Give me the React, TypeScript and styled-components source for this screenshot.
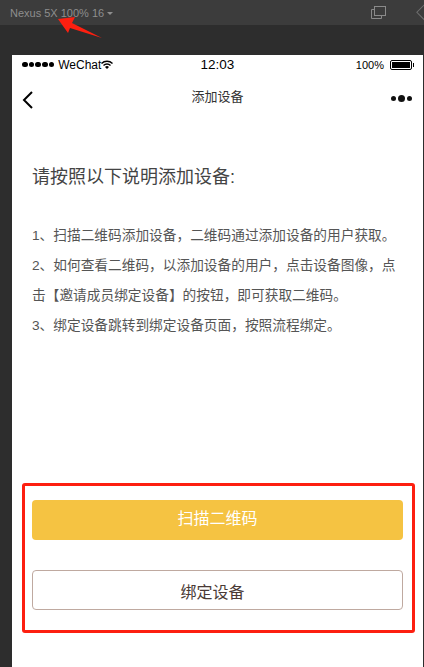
import React from 'react';
import styled, { createGlobalStyle } from 'styled-components';

const Global = createGlobalStyle`
  html, body { margin: 0; padding: 0; background: #2d2d2d; }
  body { font-family: "Liberation Sans", "Noto Sans CJK SC", sans-serif; overflow: hidden; }
  * { box-sizing: border-box; }
`;

const Page = styled.div`
  position: relative;
  width: 424px;
  height: 667px;
  overflow: hidden;
  display: flex;
  flex-direction: column;
`;

const DevToolbar = styled.div`
  height: 25px;
  flex: none;
  background: #3c3c3c;
  display: flex;
  align-items: center;
  justify-content: space-between;
  padding: 0 0 0 10px;
  color: #8e8e8e;
  font-size: 11px;
`;

const DeviceLabel = styled.div`
  display: flex;
  align-items: center;
  gap: 3px;
`;

const Caret = styled.span`
  width: 0;
  height: 0;
  margin-top: 1px;
  border-left: 3px solid transparent;
  border-right: 3px solid transparent;
  border-top: 3px solid #8e8e8e;
`;

const ToolIcons = styled.div`
  display: flex;
  align-items: center;
  gap: 30px;
  margin-right: -12px;
`;

const Stage = styled.div`
  flex: 1;
  padding: 30px 1px 0 12px;
  display: flex;
  min-height: 0;
`;

const Phone = styled.div`
  flex: 1;
  background: #fff;
  display: flex;
  flex-direction: column;
`;

const StatusBar = styled.div`
  height: 19px;
  flex: none;
  display: grid;
  grid-template-columns: 1fr auto 1fr;
  align-items: center;
  padding: 0 10px;
  font-size: 12px;
  color: #000;
`;

const Carrier = styled.div`
  display: flex;
  align-items: center;
  gap: 4px;
`;

const Signal = styled.div`
  display: flex;
  gap: 1.2px;
`;

const SignalDot = styled.span`
  width: 5.5px;
  height: 5.5px;
  border-radius: 50%;
  background: #000;
`;

const Clock = styled.div`
  font-size: 13.5px;
`;

const Battery = styled.div`
  justify-self: end;
  display: flex;
  align-items: center;
  gap: 6px;
  font-size: 11px;
  margin-right: 1px;
`;

const BatteryBody = styled.span`
  width: 22px;
  height: 10px;
  border: 1px solid #000;
  border-radius: 2px;
  padding: 1px;
  display: block;
  position: relative;

  &::before {
    content: '';
    display: block;
    height: 100%;
    background: #000;
  }

  &::after {
    content: '';
    position: absolute;
    right: -3px;
    top: 2px;
    width: 1.5px;
    height: 4px;
    background: #000;
  }
`;

const NavBar = styled.div`
  height: 43px;
  flex: none;
  position: relative;
  display: flex;
  align-items: center;
  justify-content: space-between;
  padding: 0 11px 0 10px;
`;

const BackIcon = styled.svg`
  margin-top: 8px;
`;

const NavTitle = styled.div`
  position: absolute;
  left: 0;
  right: 0;
  margin-top: -1px;
  text-align: center;
  font-size: 13px;
  color: #333;
  pointer-events: none;
`;

const MoreDots = styled.div`
  display: flex;
  align-items: center;
  gap: 2px;
  margin-top: 6px;
`;

const Dot = styled.span<{ $big?: boolean }>`
  width: ${p => (p.$big ? 7 : 5)}px;
  height: ${p => (p.$big ? 7 : 5)}px;
  border-radius: 50%;
  background: #111;
`;

const Content = styled.div`
  flex: 1;
  display: flex;
  flex-direction: column;
  padding: 0 20px;
`;

const Heading = styled.h1`
  margin: 46px 0 0;
  font-size: 18px;
  line-height: 28px;
  font-weight: 400;
  color: #444;
`;

const Steps = styled.div`
  margin-top: 30px;
  font-size: 13.7px;
  line-height: 30px;
  color: #555;
`;

const Actions = styled.div`
  margin-top: auto;
  padding-bottom: 57px;
  display: flex;
  flex-direction: column;
  gap: 30px;
`;

const Button = styled.button<{ $primary?: boolean }>`
  height: 40px;
  width: 100%;
  border-radius: 4px;
  font-family: inherit;
  font-size: 16px;
  padding: ${p => (p.$primary ? '0 0 6px' : '2px 10px 0 0')};
  border: ${p => (p.$primary ? 'none' : '1px solid #bfa9a0')};
  background: ${p => (p.$primary ? '#f5c342' : '#fff')};
  color: ${p => (p.$primary ? '#fff' : '#4a3a36')};
`;

const Highlight = styled.div`
  position: absolute;
  left: 22px;
  top: 483px;
  width: 393px;
  height: 150px;
  border: 3px solid #fd1f10;
  border-radius: 3px;
  pointer-events: none;
`;

const Arrow = styled.svg`
  position: absolute;
  left: 56px;
  top: 15px;
`;

const steps = [
  '1、扫描二维码添加设备，二维码通过添加设备的用户获取。',
  '2、如何查看二维码，以添加设备的用户，点击设备图像，点击【邀请成员绑定设备】的按钮，即可获取二维码。',
  '3、绑定设备跳转到绑定设备页面，按照流程绑定。',
];

export default function App() {
  return (
    <Page>
      <Global />
      <DevToolbar>
        <DeviceLabel>
          Nexus 5X 100% 16
          <Caret />
        </DeviceLabel>
        <ToolIcons>
          <svg width="15" height="13" viewBox="0 0 15 13" fill="none" stroke="#8a8a8a">
            <path d="M3.5 3.5h-3v9h10v-3" />
            <rect x="3.5" y="0.5" width="11" height="9" />
          </svg>
          <svg width="20" height="20" viewBox="0 0 20 20" fill="none" stroke="#6e6e6e">
            <rect x="4" y="3" width="12" height="14" transform="rotate(-45 10 10)" />
          </svg>
        </ToolIcons>
      </DevToolbar>
      <Stage>
        <Phone>
          <StatusBar>
            <Carrier>
              <Signal>
                {[0, 1, 2, 3, 4].map(i => (
                  <SignalDot key={i} />
                ))}
              </Signal>
              WeChat
              <svg width="12" height="9" viewBox="0 0 12 9" style={{ marginLeft: -4 }}>
                <path d="M0 3a8.5 8.5 0 0 1 12 0l-1 1a7 7 0 0 0-10 0z M2 5a5.6 5.6 0 0 1 8 0l-1 1a4 4 0 0 0-6 0z M4 7a2.8 2.8 0 0 1 4 0l-2 2z" fill="#000" />
              </svg>
            </Carrier>
            <Clock>12:03</Clock>
            <Battery>
              100%
              <BatteryBody />
            </Battery>
          </StatusBar>
          <NavBar>
            <BackIcon width="12" height="18" viewBox="0 0 12 18" fill="none" stroke="#000" strokeWidth="2">
              <path d="M10 1 L2 9 L10 17" />
            </BackIcon>
            <NavTitle>添加设备</NavTitle>
            <MoreDots>
              <Dot />
              <Dot $big />
              <Dot />
            </MoreDots>
          </NavBar>
          <Content>
            <Heading>请按照以下说明添加设备:</Heading>
            <Steps>
              {steps.map(s => (
                <div key={s}>{s}</div>
              ))}
            </Steps>
            <Actions>
              <Button $primary>扫描二维码</Button>
              <Button>绑定设备</Button>
            </Actions>
          </Content>
        </Phone>
      </Stage>
      <Highlight />
      <Arrow width="50" height="25" viewBox="0 0 50 25">
        <path d="M2 4 L19 2 L16 8 L46 23 L14 13 L12 18 Z" fill="#fd1f10" />
      </Arrow>
    </Page>
  );
}
